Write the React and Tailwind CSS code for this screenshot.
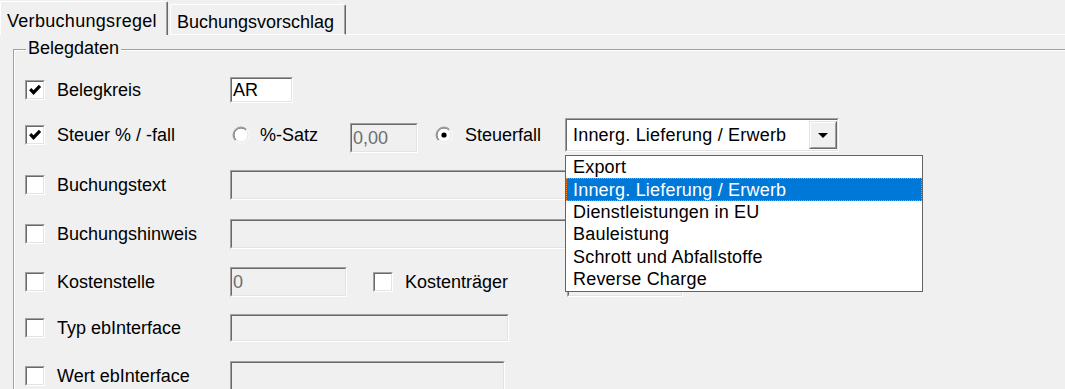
import React from "react";

function Sunken({ className = "", innerClassName = "", children }) {
  return (
    <div className={"border border-t-[#a0a0a0] border-l-[#a0a0a0] border-r-white border-b-white " + className}>
      <div className={"h-full w-full border border-t-[#696969] border-l-[#696969] border-r-[#e3e3e3] border-b-[#e3e3e3] " + innerClassName}>
        {children}
      </div>
    </div>
  );
}

function Raised({ className = "", children }) {
  return (
    <div className={"border border-t-[#e3e3e3] border-l-[#e3e3e3] border-r-[#696969] border-b-[#696969] " + className}>
      <div className="h-full w-full border border-t-white border-l-white border-r-[#a0a0a0] border-b-[#a0a0a0] bg-[#f0f0f0] flex items-center justify-center">
        {children}
      </div>
    </div>
  );
}

function Check({ checked }) {
  return (
    <Sunken className="w-[20px] h-[20px] shrink-0" innerClassName="bg-white">
      {checked && (
        <svg width="16" height="16" viewBox="0 0 16 16" className="block">
          <path d="M3.2 7.2 L6.5 10.6 L13 3.8" fill="none" stroke="#000" strokeWidth="3.2" strokeLinejoin="miter" />
        </svg>
      )}
    </Sunken>
  );
}

function Radio({ checked }) {
  return (
    <svg width="18" height="18" viewBox="0 0 18 18" className="block shrink-0">
      <circle cx="9" cy="9" r="7" fill="#fff" />
      <path d="M3.34 14.66 A8 8 0 0 1 14.66 3.34" fill="none" stroke="#a0a0a0" strokeWidth="1" />
      <path d="M14.66 3.34 A8 8 0 0 1 3.34 14.66" fill="none" stroke="#ffffff" strokeWidth="1" />
      <path d="M4.05 13.95 A7 7 0 0 1 13.95 4.05" fill="none" stroke="#696969" strokeWidth="1" />
      <path d="M13.95 4.05 A7 7 0 0 1 4.05 13.95" fill="none" stroke="#e3e3e3" strokeWidth="1" />
      {checked && <circle cx="9" cy="9" r="2.6" fill="#000" />}
    </svg>
  );
}

function Label({ checked, children, className = "w-[205px]" }) {
  return (
    <div className={"flex items-center gap-[12px] shrink-0 " + className}>
      <Check checked={checked} />
      <span className="whitespace-nowrap">{children}</span>
    </div>
  );
}

const items = [
  "Export",
  "Innerg. Lieferung / Erwerb",
  "Dienstleistungen in EU",
  "Bauleistung",
  "Schrott und Abfallstoffe",
  "Reverse Charge",
];

export default function App() {
  return (
    <div className="relative w-[1065px] h-[389px] overflow-hidden bg-[#f0f0f0] text-black font-['Liberation_Sans',Arial,sans-serif] text-[18px] leading-[22px]">
      {/* Tabs */}
      <div className="flex items-end h-[35px]">
        <div className="h-[34px] w-[168px] border-t border-l border-r border-t-white border-l-white border-r-[#696969] shadow-[inset_-1px_0_0_#a0a0a0] rounded-t-[2px] pl-[6px] pt-[8px] whitespace-nowrap tracking-[0.3px]">
          Verbuchungsregel
        </div>
        <div className="ml-[2px] h-[31px] w-[176px] border-t border-l border-r border-b border-t-white border-l-white border-b-white border-r-[#696969] shadow-[inset_-1px_0_0_#a0a0a0] rounded-t-[2px] pl-[6px] pt-[6px] whitespace-nowrap">
          Buchungsvorschlag
        </div>
        <div className="flex-1 h-px bg-white" />
      </div>

      {/* Groupbox */}
      <div className="relative ml-[13px] mt-[14px] h-[400px] border-t border-l border-t-[#a0a0a0] border-l-[#a0a0a0]">
        <span className="absolute left-[12px] top-[-13px] px-[2px] bg-[#f0f0f0] whitespace-nowrap">Belegdaten</span>
        <div className="h-full border-t border-l border-t-white border-l-white pl-[10px] flex flex-col">
          {/* Belegkreis */}
          <div className="mt-[24px] h-[30px] flex items-center">
            <Label checked>Belegkreis</Label>
            <Sunken className="w-[63px] h-[26px]" innerClassName="bg-white pl-[1px] flex items-center">
              AR
            </Sunken>
          </div>

          {/* Steuer */}
          <div className="mt-[13px] h-[34px] flex items-center">
            <Label checked>Steuer % / -fall</Label>
            <div className="w-[120px] shrink-0 flex items-center gap-[10px] pl-[2px]">
              <Radio />
              <span>%-Satz</span>
            </div>
            <Sunken className="w-[68px] h-[30px] mt-[6px] shrink-0" innerClassName="pl-[1px] flex items-center text-[#6d6d6d]">
              0,00
            </Sunken>
            <div className="ml-[17px] w-[130px] shrink-0 flex items-center gap-[12px]">
              <Radio checked />
              <span>Steuerfall</span>
            </div>
            <Sunken className="w-[274px] h-[34px] shrink-0" innerClassName="bg-white flex items-center justify-between pl-[6px]">
              <span className="whitespace-nowrap tracking-[0.2px]">Innerg. Lieferung / Erwerb</span>
              <Raised className="w-[28px] h-[28px]">
                <svg width="10" height="5" viewBox="0 0 10 5" className="block">
                  <polygon points="0,0 10,0 5,5" fill="#000" />
                </svg>
              </Raised>
            </Sunken>
          </div>

          {/* Buchungstext */}
          <div className="mt-[18px] h-[30px] flex items-center">
            <Label>Buchungstext</Label>
            <Sunken className="w-[608px] h-[30px] shrink-0" innerClassName="bg-[#f0f0f0]" />
          </div>

          {/* Buchungshinweis */}
          <div className="mt-[19px] h-[30px] flex items-center">
            <Label>Buchungshinweis</Label>
            <Sunken className="w-[608px] h-[30px] shrink-0" innerClassName="bg-[#f0f0f0]" />
          </div>

          {/* Kostenstelle */}
          <div className="mt-[18px] h-[30px] flex items-center">
            <Label>Kostenstelle</Label>
            <Sunken className="w-[117px] h-[30px] shrink-0" innerClassName="pl-[1px] flex items-center text-[#6d6d6d]">
              0
            </Sunken>
            <Label className="ml-[26px] w-[194px]">Kostenträger</Label>
            <Sunken className="w-[116px] h-[30px] shrink-0" innerClassName="bg-[#f0f0f0]" />
          </div>

          {/* Typ ebInterface */}
          <div className="mt-[16px] h-[30px] flex items-center">
            <Label>Typ ebInterface</Label>
            <Sunken className="w-[279px] h-[28px] shrink-0" innerClassName="bg-[#f0f0f0]" />
          </div>

          {/* Wert ebInterface */}
          <div className="mt-[18px] h-[30px] flex items-center">
            <Label>Wert ebInterface</Label>
            <Sunken className="w-[275px] h-[30px] shrink-0" innerClassName="bg-[#f0f0f0]" />
          </div>
        </div>
      </div>

      {/* Dropdown list */}
      <div className="absolute left-[565px] top-[155px] w-[358px] h-[137px] bg-white border border-[#646464] flex flex-col tracking-[0.2px]">
        {items.map((it, i) =>
          i === 1 ? (
            <div
              key={it}
              className="h-[22.4px] shrink-0 flex items-center pl-[6px] bg-[#0078d7] text-white border border-dotted border-[#ff8728] whitespace-nowrap"
            >
              {it}
            </div>
          ) : (
            <div key={it} className="h-[22.4px] shrink-0 flex items-center pl-[7px] whitespace-nowrap">
              {it}
            </div>
          )
        )}
      </div>
    </div>
  );
}
